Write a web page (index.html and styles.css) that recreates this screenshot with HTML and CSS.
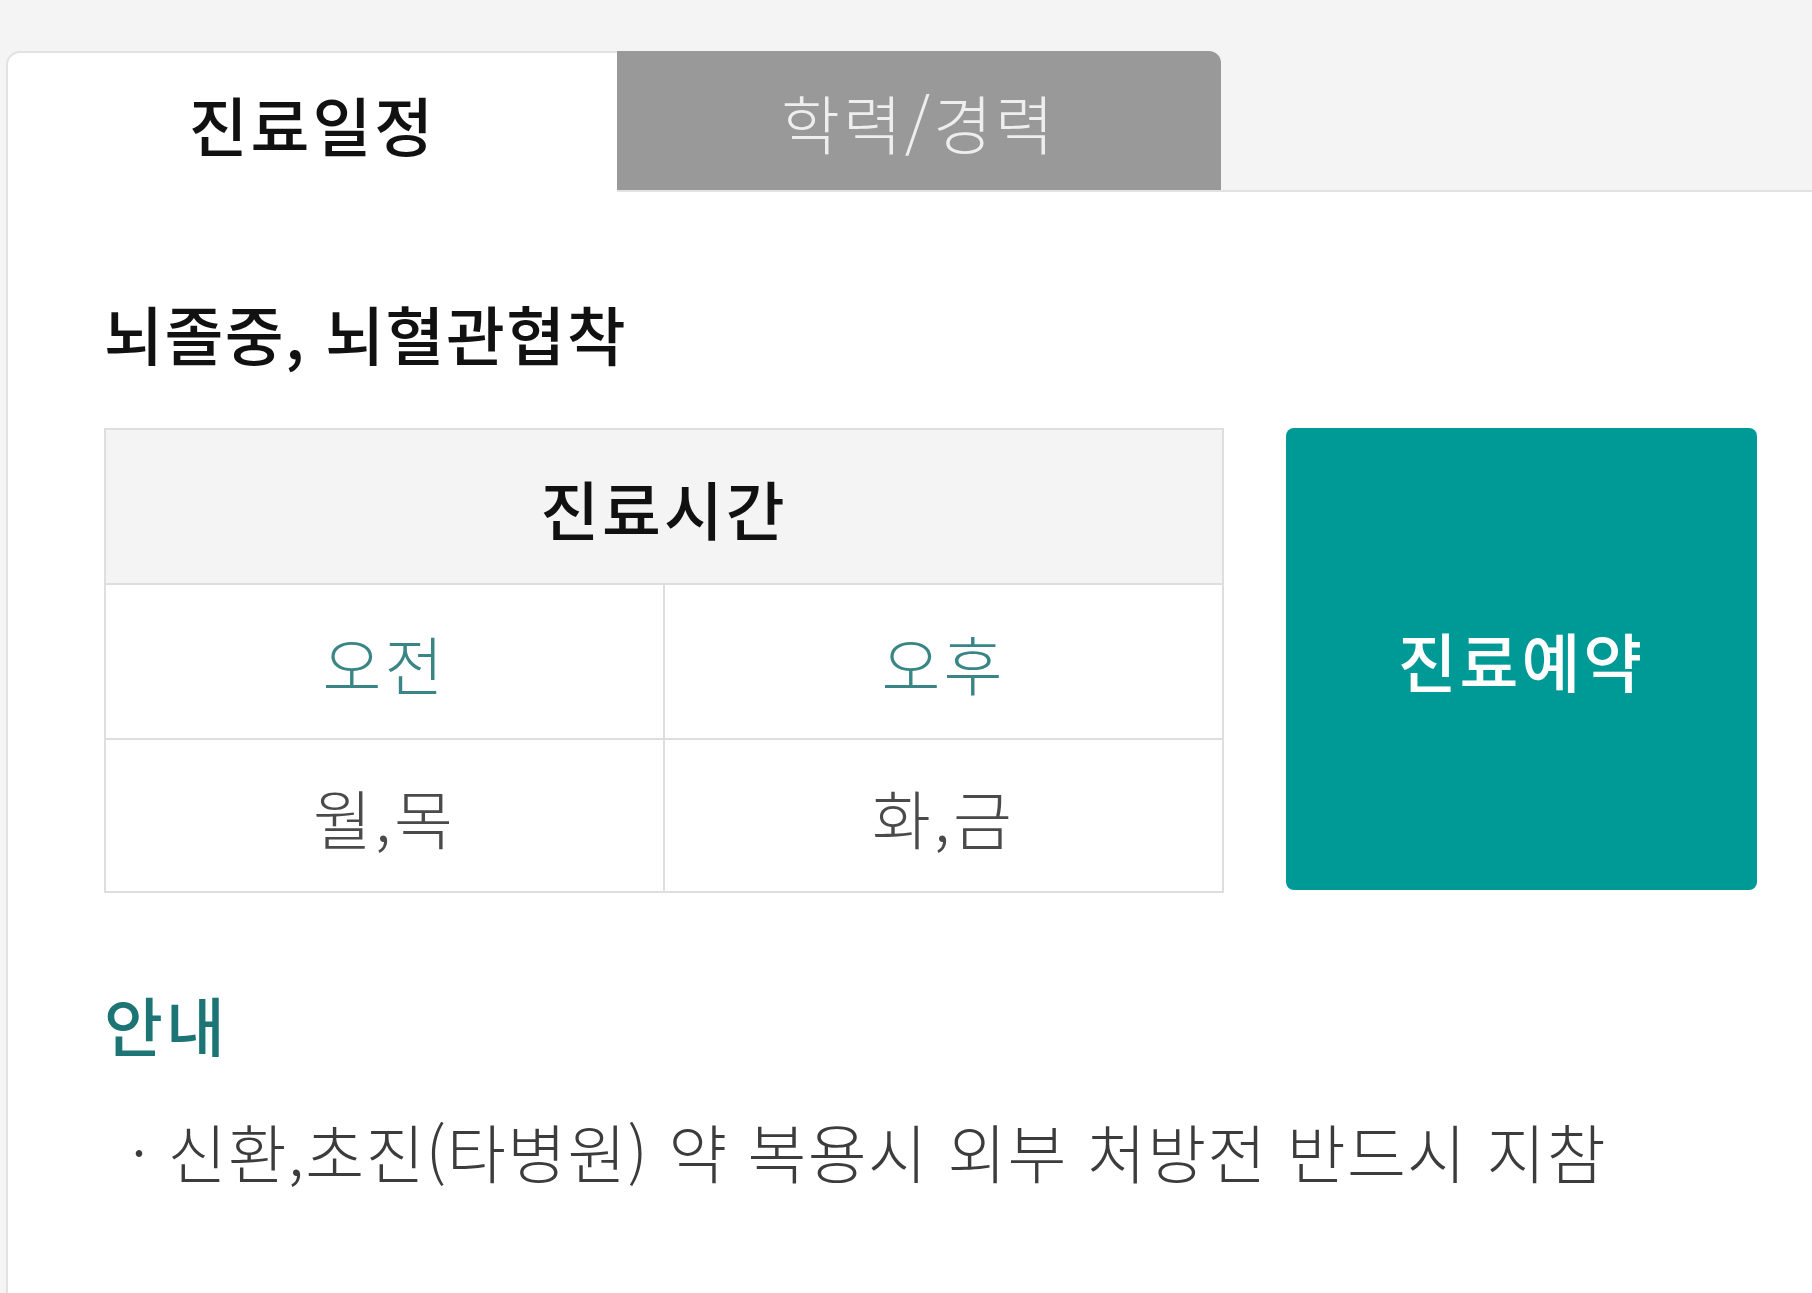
FILE: index.html
```html
<!DOCTYPE html>
<html lang="ko">
<head>
<meta charset="utf-8">
<title>진료일정</title>
<link rel="stylesheet" href="styles.css">
</head>
<body>
<div class="page">
  <div class="tabs">
    <div class="tab tab-active">진료일정</div>
    <div class="tab tab-inactive">학력/경력</div>
    <div class="tab-rest"></div>
  </div>
  <div class="panel">
    <h2 class="dept">뇌졸중, 뇌혈관협착</h2>
    <div class="schedule">
      <div class="table">
        <div class="row head">진료시간</div>
        <div class="row cols">
          <div class="cell label">오전</div>
          <div class="cell label">오후</div>
        </div>
        <div class="row cols last">
          <div class="cell day">월,목</div>
          <div class="cell day">화,금</div>
        </div>
      </div>
      <a class="reserve" href="#">진료예약</a>
    </div>
    <h3 class="notice-title">안내</h3>
    <p class="notice">· 신환,초진(타병원) 약 복용시 외부 처방전 반드시 지참</p>
  </div>
</div>
</body>
</html>
```

FILE: styles.css
```css
html, body {
  margin: 0;
  padding: 0;
  background: #f4f4f4;
  font-family: "Noto Sans CJK KR", "Noto Sans", sans-serif;
  height: 100%;
}

.page {
  padding: 51px 0 0 6px;
  min-height: 100%;
  box-sizing: border-box;
  display: flex;
  flex-direction: column;
}

.tabs {
  display: flex;
  height: 141px;
}

.tab {
  display: flex;
  align-items: center;
  justify-content: center;
  font-size: 64px;
  letter-spacing: 3px;
  box-sizing: border-box;
}

.tab-active {
  width: 611px;
  background: #fff;
  border-top: 2px solid #e2e2e2;
  border-left: 2px solid #e2e2e2;
  border-radius: 14px 0 0 0;
  color: #111;
  font-weight: 500;
}

.tab-inactive {
  width: 604px;
  background: #999999;
  color: #eeeeee;
  font-weight: 300;
  border-radius: 0 12px 0 0;
  border-bottom: 2px solid #e2e2e2;
}

.tab-rest {
  flex: 1;
  border-bottom: 2px solid #e2e2e2;
}

.panel {
  flex: 1;
  background: #fff;
  border-left: 2px solid #e2e2e2;
  padding: 98px 0 60px 96px;
}

.dept {
  margin: 0;
  font-size: 64px;
  letter-spacing: 1.5px;
  line-height: 84px;
  font-weight: 500;
  color: #111;
}

.schedule {
  display: flex;
  gap: 62px;
  margin-top: 54px;
}

.table {
  width: 1120px;
  border: 2px solid #dedede;
  box-sizing: border-box;
  display: flex;
  flex-direction: column;
}

.row {
  height: 155px;
  box-sizing: border-box;
  border-bottom: 2px solid #dedede;
}

.row.last {
  border-bottom: none;
  height: 151px;
}

.head {
  background: #f4f4f4;
  display: flex;
  align-items: center;
  justify-content: center;
  font-size: 64px;
  letter-spacing: 3px;
  font-weight: 500;
  color: #111;
}

.cols {
  display: flex;
}

.cell {
  flex: 1;
  display: flex;
  align-items: center;
  justify-content: center;
  font-size: 64px;
  letter-spacing: 3px;
  font-weight: 300;
}

.cell + .cell {
  border-left: 2px solid #dedede;
}

.label {
  color: #3a8585;
}

.day {
  color: #4a4a4a;
}

.reserve {
  width: 471px;
  height: 462px;
  background: #009a96;
  border-radius: 8px;
  color: #fff;
  text-decoration: none;
  font-size: 64px;
  letter-spacing: 3px;
  font-weight: 500;
  display: flex;
  align-items: center;
  justify-content: center;
}

.notice-title {
  margin: 88px 0 0;
  font-size: 64px;
  letter-spacing: 3px;
  line-height: 84px;
  font-weight: 500;
  color: #1d7474;
}

.notice {
  margin: 43px 0 0 27px;
  font-size: 64px;
  letter-spacing: 1.3px;
  line-height: 84px;
  font-weight: 300;
  color: #3c3c3c;
}
```
